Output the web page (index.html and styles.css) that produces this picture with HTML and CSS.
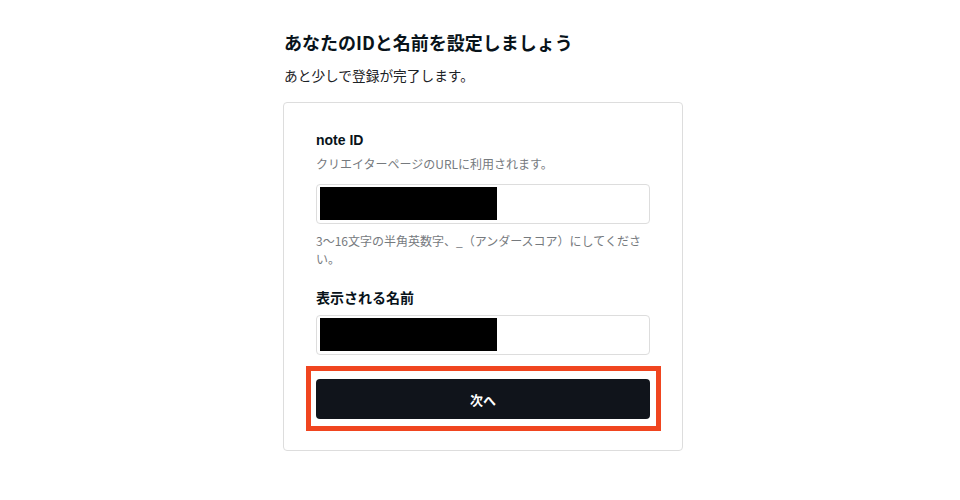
FILE: index.html
```html
<!DOCTYPE html>
<html lang="ja">
<head>
<meta charset="utf-8">
<link rel="stylesheet" href="styles.css">
</head>
<body>
<main class="page">
  <h1 class="title">あなたのIDと名前を設定しましょう</h1>
  <p class="lead">あと少しで登録が完了します。</p>
  <section class="card">
    <div class="field">
      <label class="label">note ID</label>
      <p class="desc">クリエイターページのURLに利用されます。</p>
      <div class="input"><span class="redact"></span></div>
      <p class="help">3〜16文字の半角英数字、_（アンダースコア）にしてください。</p>
    </div>
    <div class="field field-name">
      <label class="label">表示される名前</label>
      <div class="input"><span class="redact"></span></div>
    </div>
    <div class="action">
      <button class="next">次へ</button>
      <span class="highlight"></span>
    </div>
  </section>
</main>
</body>
</html>
```
FILE: styles.css
```css
* { box-sizing: border-box; }
html, body { margin: 0; padding: 0; background: #fff; }
body {
  font-family: "Noto Sans CJK JP", "Noto Sans", sans-serif;
  color: #08131a;
}
.page {
  width: 400px;
  margin-left: calc(50% - 197px);
  padding-top: 29px;
}
.title {
  margin: 0;
  font-size: 18px;
  line-height: 26px;
  font-weight: 700;
  padding-left: 1px;
}
.lead {
  margin: 10px 0 0;
  font-size: 13.7px;
  line-height: 20px;
  padding-left: 1px;
  color: #1c2226;
}
.card {
  margin-top: 17px;
  border: 1px solid #dddddd;
  border-radius: 4px;
  padding: 27px 32px 31px;
  display: flex;
  flex-direction: column;
}
.field { display: flex; flex-direction: column; }
.label {
  font-family: "Liberation Sans", "Noto Sans CJK JP", sans-serif;
  font-size: 14px;
  line-height: 20px;
  font-weight: 700;
}
.field-name .label { font-family: "Noto Sans CJK JP", sans-serif; }
.field-name { margin-top: 19px; }
.desc {
  margin: 5px 0 0;
  font-size: 12px;
  line-height: 18px;
  color: #767a7e;
}
.input {
  margin-top: 11px;
  height: 40px;
  border: 1px solid #dddddd;
  border-radius: 4px;
  padding: 2px 3px;
}
.field-name .input { margin-top: 8px; }
.redact {
  display: block;
  width: 177px;
  height: 33px;
  background: #000;
}
.help {
  margin: 8px 0 0;
  font-size: 12px;
  line-height: 18px;
  color: #767a7e;
}
.action {
  position: relative;
  margin-top: 24px;
}
.next {
  display: block;
  width: 100%;
  height: 40px;
  border: 0;
  border-radius: 4px;
  background: #10141b;
  color: #fff;
  font-family: "Noto Sans CJK JP", sans-serif;
  font-size: 13px;
  font-weight: 700;
}
.highlight {
  position: absolute;
  left: -10px;
  right: -11px;
  top: -13px;
  bottom: -12px;
  border: 5px solid #f0451f;
  pointer-events: none;
}
```
